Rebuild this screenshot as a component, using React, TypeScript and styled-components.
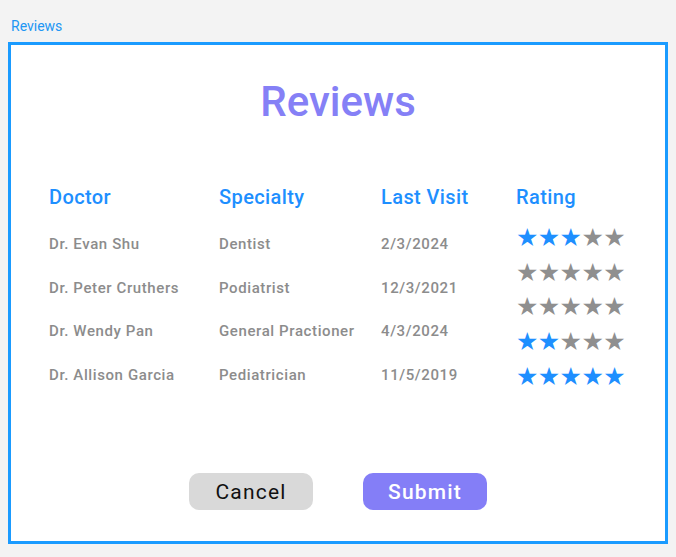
import React from "react";
import styled, { createGlobalStyle } from "styled-components";

const Global = createGlobalStyle`
  html, body { margin: 0; padding: 0; background: #f3f3f3; }
  body { margin: 8px; font-family: Roboto, "Liberation Sans", sans-serif; }
`;

const Page = styled.div`
  display: flex;
  flex-direction: column;
`;

const Crumb = styled.div`
  color: #2196f3;
  font-size: 14px;
  line-height: 16px;
  padding: 10px 0 0 3px;
  height: 34px;
  box-sizing: border-box;
`;

const Frame = styled.div`
  border: 3px solid #1a9bff;
  background: #fff;
  height: 502px;
  box-sizing: border-box;
  display: flex;
  flex-direction: column;
  align-items: stretch;
`;

const Title = styled.h1`
  margin: 32px 0 0;
  text-align: center;
  color: #8580f6;
  font-size: 42px;
  font-weight: 500;
  line-height: 50px;
`;

const Table = styled.div`
  display: grid;
  grid-template-columns: 170px 162px 135px 1fr;
  padding-left: 38px;
  margin-top: 58px;
`;

const Column = styled.div`
  display: flex;
  flex-direction: column;
`;

const Header = styled.div<{ $gap: number }>`
  color: #1e8fff;
  font-size: 20px;
  font-weight: 500;
  letter-spacing: 0.4px;
  line-height: 24px;
  margin-bottom: ${(p) => p.$gap}px;
`;

const Cell = styled.div`
  color: #8c8c8c;
  font-size: 15px;
  font-weight: 500;
  letter-spacing: 0.6px;
  line-height: 43.5px;
`;

const StarRow = styled.div`
  display: flex;
  height: 34.7px;
  align-items: center;
`;

const Star = styled.span<{ $on: boolean }>`
  color: ${(p) => (p.$on ? "#1e8fff" : "#8f8f8f")};
  font-family: "DejaVu Sans", sans-serif;
  font-size: 25px;
  line-height: 1;
  width: 21.8px;
  text-align: center;
`;

const Buttons = styled.div`
  display: flex;
  justify-content: center;
  gap: 50px;
  margin-top: auto;
  margin-bottom: 31px;
`;

const Button = styled.button<{ $primary?: boolean }>`
  width: 124px;
  height: 37px;
  border: none;
  border-radius: 10px;
  font-family: Roboto, "Liberation Sans", sans-serif;
  font-size: 21px;
  letter-spacing: 1.2px;
  font-weight: ${(p) => (p.$primary ? 500 : 400)};
  background: ${(p) => (p.$primary ? "#847ef7" : "#d9d9d9")};
  color: ${(p) => (p.$primary ? "#fff" : "#111")};
  padding: 0;
`;

const rows = [
  { doctor: "Dr. Evan Shu", specialty: "Dentist", visit: "2/3/2024" },
  { doctor: "Dr. Peter Cruthers", specialty: "Podiatrist", visit: "12/3/2021" },
  { doctor: "Dr. Wendy Pan", specialty: "General Practioner", visit: "4/3/2024" },
  { doctor: "Dr. Allison Garcia", specialty: "Pediatrician", visit: "11/5/2019" },
];

const ratings = [3, 0, 0, 2, 5];

export default function App() {
  return (
    <Page>
      <Global />
      <Crumb>Reviews</Crumb>
      <Frame>
        <Title>Reviews</Title>
        <Table>
          <Column>
            <Header $gap={14}>Doctor</Header>
            {rows.map((r) => (
              <Cell key={r.doctor}>{r.doctor}</Cell>
            ))}
          </Column>
          <Column>
            <Header $gap={14}>Specialty</Header>
            {rows.map((r) => (
              <Cell key={r.doctor}>{r.specialty}</Cell>
            ))}
          </Column>
          <Column>
            <Header $gap={14}>Last Visit</Header>
            {rows.map((r) => (
              <Cell key={r.doctor}>{r.visit}</Cell>
            ))}
          </Column>
          <Column>
            <Header $gap={11}>Rating</Header>
            {ratings.map((n, i) => (
              <StarRow key={i}>
                {[0, 1, 2, 3, 4].map((k) => (
                  <Star key={k} $on={k < n}>★</Star>
                ))}
              </StarRow>
            ))}
          </Column>
        </Table>
        <Buttons>
          <Button>Cancel</Button>
          <Button $primary>Submit</Button>
        </Buttons>
      </Frame>
    </Page>
  );
}
